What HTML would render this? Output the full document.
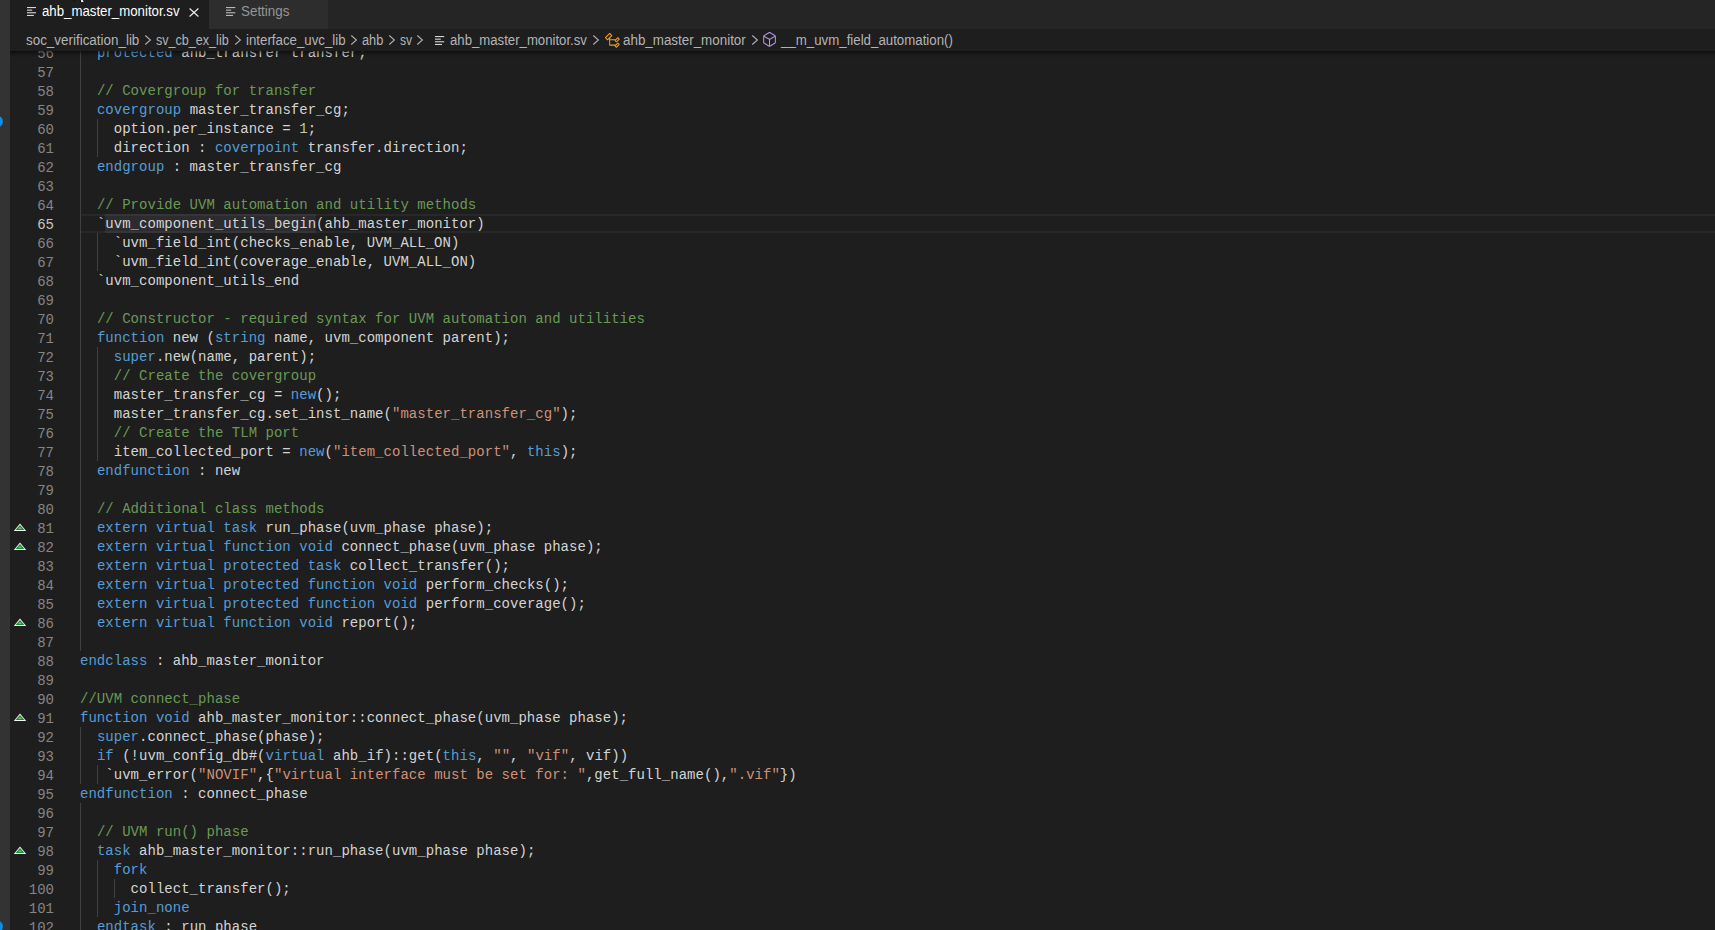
<!DOCTYPE html>
<html><head><meta charset="utf-8"><style>
html,body{margin:0;padding:0;}
body{width:1715px;height:930px;overflow:hidden;background:#1e1e1e;position:relative;font-family:"Liberation Sans",sans-serif;}
#act{position:absolute;left:0;top:0;width:10px;height:930px;background:#333333;overflow:hidden;}
.dot{position:absolute;left:-8px;width:11px;height:11px;border-radius:50%;background:#0a8ee8;}
#tabbar{position:absolute;left:10px;top:0;right:0;height:29px;background:#252526;}
.tabbg{position:absolute;top:0;height:29px;}
.bt{position:absolute;line-height:30px;font-size:14px;white-space:nowrap;transform-origin:0 0;}
#bcbar{position:absolute;left:10px;top:29px;right:0;height:22px;background:#1e1e1e;}
#hdr{position:absolute;left:0;top:0;width:1715px;height:51px;color:#b4b4b4;}
#ed{position:absolute;left:10px;top:51px;right:0;bottom:0;overflow:hidden;}
#edi{position:absolute;left:-10px;top:-51px;width:1715px;height:981px;}
#shadow{position:absolute;left:10px;right:0;top:51px;height:6px;box-shadow:#000 0 6px 6px -6px inset;}
.ln{position:absolute;left:0;width:54px;text-align:right;height:19px;line-height:19px;font-family:"Liberation Mono",monospace;font-size:14px;color:#858585;transform:translateY(2px);}
.ln.act{color:#c6c6c6;}
.cl{position:absolute;left:80px;height:19px;line-height:19px;font-family:"Liberation Mono",monospace;font-size:14px;color:#d4d4d4;white-space:pre;letter-spacing:0.03px;transform:translateY(1px);}
.k{color:#569cd6} .c{color:#6a9955} .s{color:#ce9178} .n{color:#b5cea8}
.g{position:absolute;width:1px;background:#404040;}
.mk{position:absolute;left:13px;}
#cur{position:absolute;left:81px;right:0;top:214px;height:15px;border-top:2px solid #282828;border-bottom:2px solid #282828;}
#whl{position:absolute;left:105px;width:211px;top:214px;height:15px;background:#2c2c2f;border-top:2px solid #36363a;border-bottom:2px solid #36363a;}
</style></head><body>
<div id="act"><div class="dot" style="top:116px"></div><div class="dot" style="top:921px"></div></div>
<div id="tabbar"></div>
<div class="tabbg" style="left:10px;width:199px;background:#1e1e1e"></div>
<div class="tabbg" style="left:209px;width:119px;background:#2d2d2d"></div>
<div id="bcbar"></div>
<div id="ed"><div id="edi">
<div id="cur"></div>
<div id="whl"></div>
<div class="g" style="left:80px;top:43px;height:608px"></div><div class="g" style="left:80px;top:727px;height:57px"></div><div class="g" style="left:80px;top:803px;height:133px"></div><div class="g" style="left:97px;top:119px;height:38px"></div><div class="g" style="left:97px;top:233px;height:38px"></div><div class="g" style="left:97px;top:347px;height:114px"></div><div class="g" style="left:97px;top:765px;height:19px"></div><div class="g" style="left:97px;top:860px;height:57px"></div><div class="g" style="left:114px;top:879px;height:19px"></div>
<div class="ln" style="top:43px">56</div><div class="ln" style="top:62px">57</div><div class="ln" style="top:81px">58</div><div class="ln" style="top:100px">59</div><div class="ln" style="top:119px">60</div><div class="ln" style="top:138px">61</div><div class="ln" style="top:157px">62</div><div class="ln" style="top:176px">63</div><div class="ln" style="top:195px">64</div><div class="ln act" style="top:214px">65</div><div class="ln" style="top:233px">66</div><div class="ln" style="top:252px">67</div><div class="ln" style="top:271px">68</div><div class="ln" style="top:290px">69</div><div class="ln" style="top:309px">70</div><div class="ln" style="top:328px">71</div><div class="ln" style="top:347px">72</div><div class="ln" style="top:366px">73</div><div class="ln" style="top:385px">74</div><div class="ln" style="top:404px">75</div><div class="ln" style="top:423px">76</div><div class="ln" style="top:442px">77</div><div class="ln" style="top:461px">78</div><div class="ln" style="top:480px">79</div><div class="ln" style="top:499px">80</div><div class="ln" style="top:518px">81</div><div class="ln" style="top:537px">82</div><div class="ln" style="top:556px">83</div><div class="ln" style="top:575px">84</div><div class="ln" style="top:594px">85</div><div class="ln" style="top:613px">86</div><div class="ln" style="top:632px">87</div><div class="ln" style="top:651px">88</div><div class="ln" style="top:670px">89</div><div class="ln" style="top:689px">90</div><div class="ln" style="top:708px">91</div><div class="ln" style="top:727px">92</div><div class="ln" style="top:746px">93</div><div class="ln" style="top:765px">94</div><div class="ln" style="top:784px">95</div><div class="ln" style="top:803px">96</div><div class="ln" style="top:822px">97</div><div class="ln" style="top:841px">98</div><div class="ln" style="top:860px">99</div><div class="ln" style="top:879px">100</div><div class="ln" style="top:898px">101</div><div class="ln" style="top:917px">102</div>
<div class="cl" style="top:43px">  <span class="k">protected</span> ahb_transfer transfer;</div><div class="cl" style="top:62px"></div><div class="cl" style="top:81px">  <span class="c">// Covergroup for transfer</span></div><div class="cl" style="top:100px">  <span class="k">covergroup</span> master_transfer_cg;</div><div class="cl" style="top:119px">    option.per_instance = <span class="n">1</span>;</div><div class="cl" style="top:138px">    direction : <span class="k">coverpoint</span> transfer.direction;</div><div class="cl" style="top:157px">  <span class="k">endgroup</span> : master_transfer_cg</div><div class="cl" style="top:176px"></div><div class="cl" style="top:195px">  <span class="c">// Provide UVM automation and utility methods</span></div><div class="cl" style="top:214px">  `<span class="hl">uvm_component_utils_begin</span>(ahb_master_monitor)</div><div class="cl" style="top:233px">    `uvm_field_int(checks_enable, UVM_ALL_ON)</div><div class="cl" style="top:252px">    `uvm_field_int(coverage_enable, UVM_ALL_ON)</div><div class="cl" style="top:271px">  `uvm_component_utils_end</div><div class="cl" style="top:290px"></div><div class="cl" style="top:309px">  <span class="c">// Constructor - required syntax for UVM automation and utilities</span></div><div class="cl" style="top:328px">  <span class="k">function</span> new (<span class="k">string</span> name, uvm_component parent);</div><div class="cl" style="top:347px">    <span class="k">super</span>.new(name, parent);</div><div class="cl" style="top:366px">    <span class="c">// Create the covergroup</span></div><div class="cl" style="top:385px">    master_transfer_cg = <span class="k">new</span>();</div><div class="cl" style="top:404px">    master_transfer_cg.set_inst_name(<span class="s">&quot;master_transfer_cg&quot;</span>);</div><div class="cl" style="top:423px">    <span class="c">// Create the TLM port</span></div><div class="cl" style="top:442px">    item_collected_port = <span class="k">new</span>(<span class="s">&quot;item_collected_port&quot;</span>, <span class="k">this</span>);</div><div class="cl" style="top:461px">  <span class="k">endfunction</span> : new</div><div class="cl" style="top:480px"></div><div class="cl" style="top:499px">  <span class="c">// Additional class methods</span></div><div class="cl" style="top:518px">  <span class="k">extern virtual task</span> run_phase(uvm_phase phase);</div><div class="cl" style="top:537px">  <span class="k">extern virtual function void</span> connect_phase(uvm_phase phase);</div><div class="cl" style="top:556px">  <span class="k">extern virtual protected task</span> collect_transfer();</div><div class="cl" style="top:575px">  <span class="k">extern virtual protected function void</span> perform_checks();</div><div class="cl" style="top:594px">  <span class="k">extern virtual protected function void</span> perform_coverage();</div><div class="cl" style="top:613px">  <span class="k">extern virtual function void</span> report();</div><div class="cl" style="top:632px"></div><div class="cl" style="top:651px"><span class="k">endclass</span> : ahb_master_monitor</div><div class="cl" style="top:670px"></div><div class="cl" style="top:689px"><span class="c">//UVM connect_phase</span></div><div class="cl" style="top:708px"><span class="k">function void</span> ahb_master_monitor::connect_phase(uvm_phase phase);</div><div class="cl" style="top:727px">  <span class="k">super</span>.connect_phase(phase);</div><div class="cl" style="top:746px">  <span class="k">if</span> (!uvm_config_db#(<span class="k">virtual</span> ahb_if)::get(<span class="k">this</span>, <span class="s">&quot;&quot;</span>, <span class="s">&quot;vif&quot;</span>, vif))</div><div class="cl" style="top:765px">   `uvm_error(<span class="s">&quot;NOVIF&quot;</span>,{<span class="s">&quot;virtual interface must be set for: &quot;</span>,get_full_name(),<span class="s">&quot;.vif&quot;</span>})</div><div class="cl" style="top:784px"><span class="k">endfunction</span> : connect_phase</div><div class="cl" style="top:803px"></div><div class="cl" style="top:822px">  <span class="c">// UVM run() phase</span></div><div class="cl" style="top:841px">  <span class="k">task</span> ahb_master_monitor::run_phase(uvm_phase phase);</div><div class="cl" style="top:860px">    <span class="k">fork</span></div><div class="cl" style="top:879px">      collect_transfer();</div><div class="cl" style="top:898px">    <span class="k">join_none</span></div><div class="cl" style="top:917px">  <span class="k">endtask</span> : run_phase</div>
<svg class="mk" style="top:523px" width="14" height="9" viewBox="0 0 14 9"><path d="M7 0.5 L13.2 7.9 L0.8 7.9 Z" fill="#f4f4f4"/><path d="M7 2 L11.4 6.9 L2.6 6.9 Z" fill="#128c30"/><path d="M7 3.7 L9 5.9 L5 5.9 Z" fill="#86b46c"/></svg><svg class="mk" style="top:542px" width="14" height="9" viewBox="0 0 14 9"><path d="M7 0.5 L13.2 7.9 L0.8 7.9 Z" fill="#f4f4f4"/><path d="M7 2 L11.4 6.9 L2.6 6.9 Z" fill="#128c30"/><path d="M7 3.7 L9 5.9 L5 5.9 Z" fill="#86b46c"/></svg><svg class="mk" style="top:618px" width="14" height="9" viewBox="0 0 14 9"><path d="M7 0.5 L13.2 7.9 L0.8 7.9 Z" fill="#f4f4f4"/><path d="M7 2 L11.4 6.9 L2.6 6.9 Z" fill="#128c30"/><path d="M7 3.7 L9 5.9 L5 5.9 Z" fill="#86b46c"/></svg><svg class="mk" style="top:713px" width="14" height="9" viewBox="0 0 14 9"><path d="M7 0.5 L13.2 7.9 L0.8 7.9 Z" fill="#f4f4f4"/><path d="M7 2 L11.4 6.9 L2.6 6.9 Z" fill="#128c30"/><path d="M7 3.7 L9 5.9 L5 5.9 Z" fill="#86b46c"/></svg><svg class="mk" style="top:846px" width="14" height="9" viewBox="0 0 14 9"><path d="M7 0.5 L13.2 7.9 L0.8 7.9 Z" fill="#f4f4f4"/><path d="M7 2 L11.4 6.9 L2.6 6.9 Z" fill="#128c30"/><path d="M7 3.7 L9 5.9 L5 5.9 Z" fill="#86b46c"/></svg>
</div></div>
<div id="shadow"></div>
<div id="hdr">
<div style="position:absolute;left:81px;top:0;width:2px;height:1.5px;background:#e8e8e8"></div><div style="position:absolute;left:74px;top:0;width:1px;height:1px;background:#0a0a0a"></div><div style="position:absolute;left:80px;top:1px;width:1px;height:1px;background:#0a0a0a"></div><div style="position:absolute;left:83px;top:1px;width:1px;height:1px;background:#777"></div>
<svg style="position:absolute;left:27.3px;top:7px" width="10" height="10" viewBox="0 0 10 10"><g fill="#d8d8d8"><rect x="0" y="0" width="9" height="1.1"/><rect x="0" y="2.6" width="5.2" height="1.1"/><rect x="0" y="5.2" width="9" height="1.1"/><rect x="0" y="7.9" width="6.8" height="1.1"/></g></svg>
<span class="bt" style="left:42px;top:-4px;color:#ffffff;transform:scaleX(0.945)">ahb_master_monitor.sv</span>
<svg style="position:absolute;left:189px;top:7.5px" width="10" height="9" viewBox="0 0 10 9"><path d="M0.6 0.5 L9.4 8.5 M9.4 0.5 L0.6 8.5" stroke="#e8e8e8" stroke-width="1.2"/></svg>
<svg style="position:absolute;left:226px;top:7px" width="10" height="10" viewBox="0 0 10 10"><g fill="#b8b8b8"><rect x="0" y="0" width="9.3" height="1.1"/><rect x="0" y="2.6" width="5.2" height="1.1"/><rect x="0" y="5.2" width="9.3" height="1.1"/><rect x="0" y="7.9" width="7" height="1.1"/></g></svg>
<span class="bt" style="left:241.2px;top:-4px;color:#969696;transform:scaleX(0.957)">Settings</span>
<span class="bt" style="left:26px;top:25px;transform:scaleX(0.958)">soc_verification_lib</span><svg style="position:absolute;left:144px;top:34px" width="8" height="12" viewBox="0 0 8 12"><path d="M1.3 1.5 L6.4 6 L1.3 10.5" fill="none" stroke="#b0b0b0" stroke-width="1.1"/></svg><span class="bt" style="left:156px;top:25px;transform:scaleX(0.898)">sv_cb_ex_lib</span><svg style="position:absolute;left:234px;top:34px" width="8" height="12" viewBox="0 0 8 12"><path d="M1.3 1.5 L6.4 6 L1.3 10.5" fill="none" stroke="#b0b0b0" stroke-width="1.1"/></svg><span class="bt" style="left:245.5px;top:25px;transform:scaleX(0.948)">interface_uvc_lib</span><svg style="position:absolute;left:350px;top:34px" width="8" height="12" viewBox="0 0 8 12"><path d="M1.3 1.5 L6.4 6 L1.3 10.5" fill="none" stroke="#b0b0b0" stroke-width="1.1"/></svg><span class="bt" style="left:361.7px;top:25px;transform:scaleX(0.913)">ahb</span><svg style="position:absolute;left:388px;top:34px" width="8" height="12" viewBox="0 0 8 12"><path d="M1.3 1.5 L6.4 6 L1.3 10.5" fill="none" stroke="#b0b0b0" stroke-width="1.1"/></svg><span class="bt" style="left:399.8px;top:25px;transform:scaleX(0.871)">sv</span><svg style="position:absolute;left:416px;top:34px" width="8" height="12" viewBox="0 0 8 12"><path d="M1.3 1.5 L6.4 6 L1.3 10.5" fill="none" stroke="#b0b0b0" stroke-width="1.1"/></svg><svg style="position:absolute;left:435px;top:36px" width="10" height="10" viewBox="0 0 10 10"><g fill="#d4d4d4"><rect x="0" y="0" width="9.2" height="1.1"/><rect x="0" y="2.6" width="5.8" height="1.1"/><rect x="0" y="5.2" width="9.2" height="1.1"/><rect x="0" y="7.9" width="7.0" height="1.1"/></g></svg><span class="bt" style="left:450px;top:25px;transform:scaleX(0.941)">ahb_master_monitor.sv</span><svg style="position:absolute;left:592px;top:34px" width="8" height="12" viewBox="0 0 8 12"><path d="M1.3 1.5 L6.4 6 L1.3 10.5" fill="none" stroke="#b0b0b0" stroke-width="1.1"/></svg><svg style="position:absolute;left:603.6px;top:31.5px" width="17" height="17" viewBox="0 0 16 16"><path fill="#ee9d28" d="M11.34 9.71h.71l2.67-2.67v-.71L13.38 5h-.7l-1.82 1.81h-5V5.56l1.86-1.85V3l-2-2H5L1 5v.71l2 2h.71l1.14-1.15v5.79l.5.5H10v.52l1.33 1.34h.71l2.67-2.67v-.71L13.37 10h-.7l-1.86 1.85h-5v-4H10v.48l1.34 1.38zm1.69-3.65l.63.63-2 2-.63-.63 2-2zm0 5l.63.63-2 2-.63-.63 2-2zM3.35 6.65L2.06 5.36l3.29-3.3 1.3 1.3-3.3 3.29z"/></svg><span class="bt" style="left:622.6px;top:25px;transform:scaleX(0.956)">ahb_master_monitor</span><svg style="position:absolute;left:750.5px;top:34px" width="8" height="12" viewBox="0 0 8 12"><path d="M1.3 1.5 L6.4 6 L1.3 10.5" fill="none" stroke="#b0b0b0" stroke-width="1.1"/></svg><svg style="position:absolute;left:761.4px;top:31.3px" width="17" height="17" viewBox="0 0 16 16"><path fill="#b294e6" d="M13.51 4l-5-3h-1l-5 3-.49.86v6l.49.85 5 3h1l5-3 .49-.85v-6L13.51 4zm-6 9.56l-4.5-2.7V5.7l4.5 2.45v5.41zM3.27 4.7l4.74-2.84 4.74 2.84-4.74 2.59L3.27 4.7zm9.74 6.16l-4.5 2.7V8.15l4.5-2.45v5.16z"/></svg><span class="bt" style="left:781px;top:25px;transform:scaleX(0.948)">__m_uvm_field_automation()</span>
</div>
</body></html>
